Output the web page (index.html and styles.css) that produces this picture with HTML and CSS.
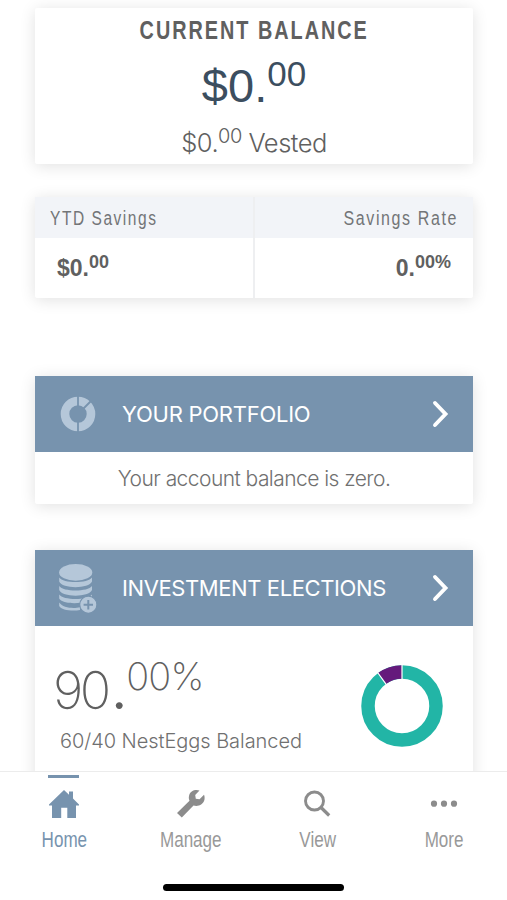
FILE: index.html
```html
<!DOCTYPE html>
<html lang="en">
<head>
<meta charset="utf-8">
<title>Account</title>
<link rel="stylesheet" href="styles.css">
</head>
<body>
<main class="content">
  <section class="card balance">
    <h1 class="balance-title"><span class="narrow">CURRENT BALANCE</span></h1>
    <p class="balance-total">$0.<span class="cents">00</span></p>
    <p class="balance-vested">$0.<span class="cents">00</span> Vested</p>
  </section>

  <section class="card stats">
    <div class="stat">
      <h2 class="stat-label"><span class="narrow">YTD Savings</span></h2>
      <p class="stat-value">$0.<span class="cents">00</span></p>
    </div>
    <div class="stat stat-right">
      <h2 class="stat-label"><span class="narrow">Savings Rate</span></h2>
      <p class="stat-value">0.<span class="cents">00%</span></p>
    </div>
  </section>

  <section class="card portfolio">
    <header class="card-head">
      <svg class="head-icon" viewBox="0 0 44 50">
        <circle cx="22" cy="25" r="13" fill="none" stroke="#b5c7d9" stroke-width="8.6"/>
        <path d="M22 6V18M22 32V45M27 20L36 11" stroke="#7793ae" stroke-width="1.8"/>
      </svg>
      <h2 class="head-title">YOUR PORTFOLIO</h2>
      <svg class="chevron" viewBox="0 0 18 28"><path d="M3 3L13.500 14L3 25"/></svg>
    </header>
    <p class="portfolio-note">Your account balance is zero.</p>
  </section>

  <section class="card elections">
    <header class="card-head">
      <svg class="head-icon" viewBox="0 0 44 50">
        <g fill="#b5c7d9">
          <ellipse cx="19.700" cy="9.400" rx="16.600" ry="8.300"/>
          <path d="M3.200 14.500C7 20.600 32 20.600 36 14.500V18.500C33 26 6 26 3.200 18.500Z"/>
          <path d="M3.200 23C7 29 32 29 36 23V27C33 34.500 6 34.500 3.200 27Z"/>
          <path d="M3.200 31.500C7 37.500 32 37.500 36 31.500V34C33 42 6 42 3.200 35.500Z"/>
          <path d="M3.200 39.500C7 45 18 46 24 44V47C16 48.500 5 47 3.200 43Z"/>
        </g>
        <circle cx="32.300" cy="41.700" r="8.600" fill="#b5c7d9" stroke="#7793ae" stroke-width="1.200"/>
        <path d="M32.300 37V46.400M27.600 41.700H37" stroke="#7793ae" stroke-width="2"/>
      </svg>
      <h2 class="head-title">INVESTMENT ELECTIONS</h2>
      <svg class="chevron" viewBox="0 0 18 28"><path d="M3 3L13.500 14L3 25"/></svg>
    </header>
    <div class="election">
      <div class="election-text">
        <p class="election-rate">90<span class="point">.</span><span class="cents">00%</span></p>
        <p class="election-name">60/40 NestEggs Balanced</p>
      </div>
      <svg class="donut" viewBox="0 0 82 82">
        <circle cx="41" cy="41" r="34" fill="none" stroke="#22b5a6" stroke-width="13.500"/>
        <path d="M21.015 13.493A34 34 0 0 1 41 7" fill="none" stroke="#651a7c" stroke-width="13.500"/>
        <path d="M41 0V15M16.600 7.500L25.900 20.300" stroke="#fff" stroke-width="1.200"/>
      </svg>
    </div>
  </section>
</main>

<footer class="tabbar">
  <nav class="tabs">
    <a class="tab active">
      <svg viewBox="0 0 32 32"><path d="M1 16.500L16 2L21 6.800V3.500H25V10.500L31 16.500V17.500H28V30H19.300V19.800H13.200V30H4V17.500H1Z" fill="#7793ae"/></svg>
      <span class="narrow">Home</span>
    </a>
    <a class="tab">
      <svg viewBox="0 0 32 32"><path d="M24.500 2.600C20.500 1 15 2.800 14 8C13.500 10 14 11.500 14.500 12.800L2 25L6.800 29.500L18.500 17.400C23 19 28.400 16.500 29.500 11.500C29.800 9.800 29.600 8 29 6.800L24.500 11.200L20.800 10.800L20.200 7Z" fill="#8c8c8c"/></svg>
      <span class="narrow">Manage</span>
    </a>
    <a class="tab">
      <svg viewBox="0 0 32 32"><circle cx="13.500" cy="13" r="9" fill="none" stroke="#8c8c8c" stroke-width="2.900"/><path d="M19.500 19L28.200 27.500" stroke="#8c8c8c" stroke-width="3.200"/></svg>
      <span class="narrow">View</span>
    </a>
    <a class="tab">
      <svg viewBox="0 0 32 32"><g fill="#8c8c8c"><circle cx="6" cy="15.700" r="3.100"/><circle cx="16" cy="15.700" r="3.100"/><circle cx="26" cy="15.700" r="3.100"/></g></svg>
      <span class="narrow">More</span>
    </a>
  </nav>
  <div class="home-indicator"></div>
</footer>
</body>
</html>
```

FILE: styles.css
```css
* { box-sizing: border-box; margin: 0; padding: 0; }

body {
  width: 507px;
  height: 900px;
  overflow: hidden;
  display: flex;
  flex-direction: column;
  background: #fff;
  color: #606060;
  font-family: Inter, "Liberation Sans", sans-serif;
}

.content { flex: none; height: 771px; overflow: hidden; padding: 8px 34px 0 35px; }
.card { background: #fff; box-shadow: 0 2px 16px rgba(0, 0, 0, 0.12); border-radius: 2px; }
p, h1, h2 { white-space: nowrap; font-weight: 400; }
.cents { display: inline-block; line-height: 1; }
.narrow { display: inline-block; transform: scaleX(0.775); }

.balance { height: 156px; text-align: center; padding-top: 4px; }
.balance-title {
  height: 36px;
  font: 700 26px/36px "Liberation Sans", sans-serif;
  letter-spacing: 2.6px;
}
.balance-title .narrow { transform: scaleX(0.763); }
.balance-total { height: 66px; font: 400 47px/76px "Liberation Sans", sans-serif; color: #3c4e5f; }
.balance-total .cents { font-size: 35px; transform: translateY(-16px); }
.balance-vested { height: 50px; font-size: 25.5px; line-height: 58px; font-weight: 350; letter-spacing: -0.5px; }
.balance-vested .cents { font-size: 20px; transform: translateY(-9px); }

.stats { display: flex; height: 101px; margin-top: 33px; }
.stat { flex: 0 0 218px; }
.stat + .stat { flex: 1; border-left: 2px solid #eeeff1; }
.stat-label {
  height: 41px;
  padding: 0 15px;
  background: #f2f4f8;
  color: #737577;
  font: 400 20px/42px "Liberation Sans", sans-serif;
  letter-spacing: 2px;
}
.stat-label .narrow { transform-origin: left; }
.stat-right .narrow { transform: scaleX(0.8); transform-origin: right; }
.stat-value { padding: 0 22px; font: 700 23px/60px "Liberation Sans", sans-serif; }
.stat-value .cents { font-size: 18px; transform: translateY(-8px); }
.stat-right { text-align: right; }

.card-head { display: flex; align-items: center; height: 76px; padding: 0 23px 0 21px; background: #7793ae; }
.head-icon { width: 44px; height: 50px; }
.head-title { flex: 1; margin-left: 22px; color: #fff; font-size: 22px; line-height: 30px; letter-spacing: -0.25px; }
.elections .head-title { letter-spacing: -0.4px; }
.chevron { width: 18px; height: 28px; fill: none; stroke: #fff; stroke-width: 3.9; stroke-linecap: round; }

.portfolio { height: 128px; margin-top: 78px; }
.portfolio-note { text-align: center; color: #707070; font-size: 21px; line-height: 53px; font-weight: 330; letter-spacing: -0.55px; }

.elections { height: 250px; margin-top: 46px; }
.election { display: flex; justify-content: space-between; padding: 39px 30px 0 20px; }
.election-rate { height: 52px; margin-left: -2px; font-size: 52px; line-height: 52px; font-weight: 250; letter-spacing: -3.5px; }
.point { margin-left: 4px; font-weight: 400; }
.election-rate .cents { margin-left: 3px; font-size: 38px; letter-spacing: -0.8px; transform: translateY(-19px); }
.election-name { padding-left: 5px; color: #707070; font-size: 20px; line-height: 48px; font-weight: 330; letter-spacing: -0.05px; }
.donut { width: 82px; height: 82px; }

.tabbar { flex: 1; border-top: 1px solid #ececec; background: #fff; }
.tabs { display: flex; height: 111px; }
.tab {
  flex: 1;
  display: flex;
  flex-direction: column;
  align-items: center;
  padding: 16px 0 0 1px;
  color: #999;
  font: 400 22px/40px "Liberation Sans", sans-serif;
}
.tab svg { width: 32px; height: 32px; }
.tab.active { color: #7793ae; position: relative; }
.tab.active::before { content: ""; position: absolute; top: 3px; width: 31px; height: 3px; background: #7793ae; }
.home-indicator { width: 181px; height: 7px; margin: 1px auto 0; border-radius: 4px; background: #000; }
```
